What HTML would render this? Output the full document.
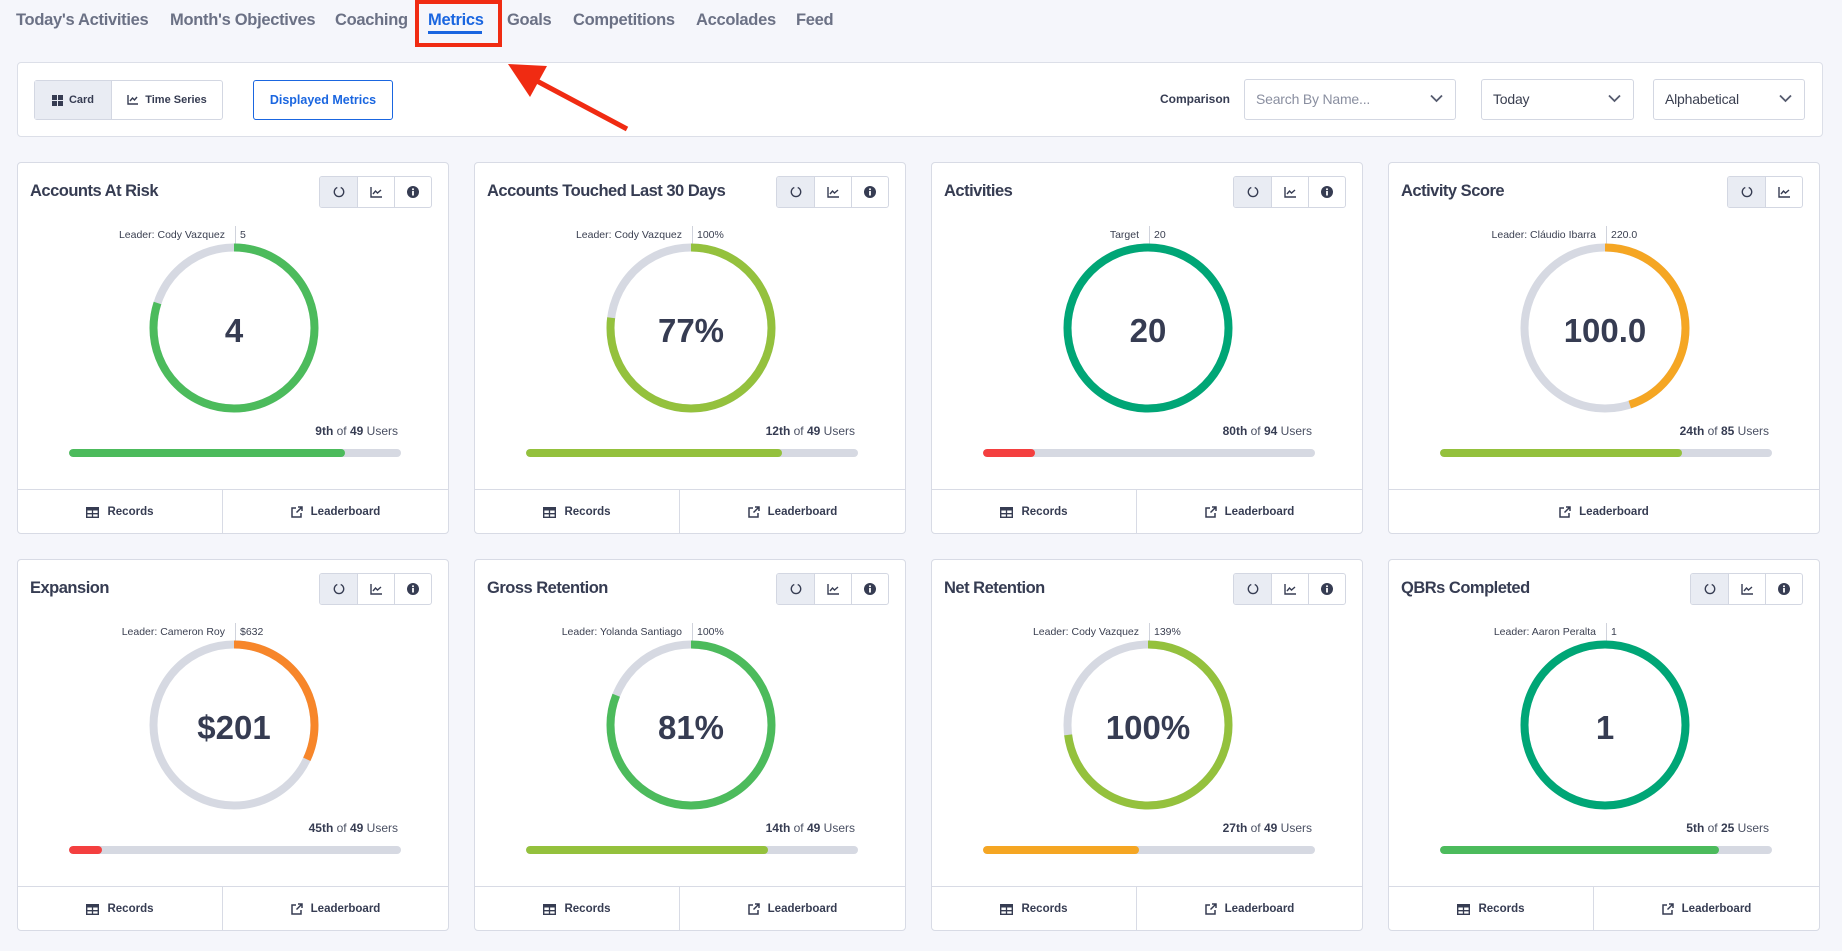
<!DOCTYPE html>
<html><head><meta charset="utf-8"><style>
*{box-sizing:border-box;margin:0;padding:0}
body{width:1842px;height:951px;background:#f5f6fb;font-family:"Liberation Sans",sans-serif;color:#363c52;position:relative;overflow:hidden}
.nav{position:absolute;top:11px;font-size:16.5px;font-weight:bold;color:#6b7185;letter-spacing:-0.3px}
.abs{position:absolute}
.panel{position:absolute;left:17px;top:62px;width:1806px;height:75px;background:#fff;border:1px solid #dcdfe8;border-radius:4px}
.btn{position:absolute;border:1px solid #d3d7e2;background:#fff;border-radius:3px;font-size:11px;font-weight:bold;display:flex;align-items:center;justify-content:center}
.sel{position:absolute;top:79px;height:41px;border:1px solid #d3d7e2;border-radius:3px;background:#fff;font-size:14px;color:#3a3f50;padding-left:11px;line-height:39px;letter-spacing:-0.2px}
.sel svg{position:absolute;right:12px;top:14px}
.card{position:absolute;width:432px;height:372px;background:#fff;border:1px solid #d8dbe5;border-radius:4px}
.title{position:absolute;left:12px;top:19px;font-size:16.5px;font-weight:bold;color:#363c52;letter-spacing:-0.5px}
.grp{position:absolute;top:13px;right:16px;height:32px;border:1px solid #d3d7e2;border-radius:3px;display:flex;overflow:hidden}
.grp div{width:37px;height:30px;display:flex;align-items:center;justify-content:center;border-left:1px solid #d3d7e2}
.grp div:first-child{border-left:none;background:#e9ecf3}
.lead{position:absolute;top:63px;left:0;width:432px;height:18px;font-size:10.5px;color:#3a3f50}
.lead .l{position:absolute;right:225px;top:3px;white-space:nowrap}
.lead .r{position:absolute;left:222px;top:3px;white-space:nowrap}
.lead .d{position:absolute;left:217px;top:0;width:1px;height:22px;background:#d0d3dc}
.ring{position:absolute;left:131px;top:80px}
.num{position:absolute;left:0;width:432px;top:149px;text-align:center;font-size:33px;font-weight:bold;color:#363c52}
.rank{position:absolute;right:50px;top:261px;font-size:12px;color:#4a5063}
.rank b{color:#363c52}
.track{position:absolute;left:51px;top:286px;width:332px;height:8px;border-radius:4px;background:#d6d9e2;overflow:hidden}
.track i{display:block;height:8px;border-radius:4px}
.foot{position:absolute;left:0;top:326px;width:430px;height:45px;border-top:1px solid #d8dbe5;display:flex;font-size:11.5px;font-weight:bold;color:#363c52}
.foot div{display:flex;align-items:center;justify-content:center;gap:8px}
.foot .a{width:205px;border-right:1px solid #d8dbe5}
.foot .b{flex:1}
</style></head><body>
<div class="nav" style="left:16px">Today's Activities</div>
<div class="nav" style="left:170px">Month's Objectives</div>
<div class="nav" style="left:335px">Coaching</div>
<div class="nav" style="left:428px;color:#1a66e0">Metrics</div>
<div class="abs" style="left:428px;top:31px;width:54px;height:3px;background:#1a66e0"></div>
<div class="abs" style="left:415px;top:0;width:87px;height:47px;border:4px solid #f02b12"></div>
<div class="nav" style="left:507px">Goals</div>
<div class="nav" style="left:573px">Competitions</div>
<div class="nav" style="left:696px">Accolades</div>
<div class="nav" style="left:796px">Feed</div>

<div class="panel"></div>
<div class="btn" style="left:34px;top:80px;width:189px;height:40px;justify-content:flex-start;padding:0">
 <div style="width:77px;height:38px;background:#e9ecf3;border-right:1px solid #d3d7e2;display:flex;align-items:center;justify-content:center;gap:6px"><svg width="11" height="11" viewBox="0 0 11 11" fill="#363c52"><rect x="0" y="0" width="5" height="5"/><rect x="6" y="0" width="5" height="5"/><rect x="0" y="6" width="5" height="5"/><rect x="6" y="6" width="5" height="5"/></svg>Card</div>
 <div style="flex:1;display:flex;align-items:center;justify-content:center;gap:7px"><svg width="11" height="10" viewBox="0 0 11 10" fill="none" stroke="#363c52" stroke-width="1.4"><path d="M1 0v9h10M3 6l2.5-3 2 2L10 2"/></svg>Time Series</div>
</div>
<div class="btn" style="left:253px;top:80px;width:140px;height:40px;border-color:#1a66e0;color:#1a66e0;font-size:12.5px">Displayed Metrics</div>
<div class="abs" style="left:1160px;top:92px;font-size:12px;font-weight:bold">Comparison</div>
<div class="sel" style="left:1244px;width:212px;color:#8a8fa0">Search By Name...<svg width="13" height="9" viewBox="0 0 13 9"><path d="M1 1.5l5.5 5.5L12 1.5" fill="none" stroke="#555b6e" stroke-width="1.8"/></svg></div>
<div class="sel" style="left:1481px;width:153px">Today<svg width="13" height="9" viewBox="0 0 13 9"><path d="M1 1.5l5.5 5.5L12 1.5" fill="none" stroke="#555b6e" stroke-width="1.8"/></svg></div>
<div class="sel" style="left:1653px;width:152px">Alphabetical<svg width="13" height="9" viewBox="0 0 13 9"><path d="M1 1.5l5.5 5.5L12 1.5" fill="none" stroke="#555b6e" stroke-width="1.8"/></svg></div>

<svg class="abs" style="left:0;top:0" width="700" height="160"><line x1="627" y1="129" x2="535" y2="80" stroke="#f02b12" stroke-width="5"/><polygon points="508,64 547,66 530,97" fill="#f02b12"/></svg>

<div id="cards"></div>
<script>
var C={g:'#4cbb5c',y:'#94c13d',t:'#00a676',a:'#f5a623',o:'#f7862a',r:'#f43f3f'};
var data=[
['Accounts At Risk','Leader: Cody Vazquez','5','4',.80,'g','9th','49',.83,'g',3,2],
['Accounts Touched Last 30 Days','Leader: Cody Vazquez','100%','77%',.77,'y','12th','49',.77,'y',3,2],
['Activities','Target','20','20',1,'t','80th','94',.156,'r',3,2],
['Activity Score','Leader: Cláudio Ibarra','220.0','100.0',.45,'a','24th','85',.73,'y',2,1],
['Expansion','Leader: Cameron Roy','$632','$201',.32,'o','45th','49',.10,'r',3,2],
['Gross Retention','Leader: Yolanda Santiago','100%','81%',.81,'g','14th','49',.73,'y',3,2],
['Net Retention','Leader: Cody Vazquez','139%','100%',.73,'y','27th','49',.47,'a',3,2],
['QBRs Completed','Leader: Aaron Peralta','1','1',1,'t','5th','25',.84,'g',3,2]];
var xs=[17,474,931,1388],ys=[162,559],h='';
var ic1='<svg width="12" height="12" viewBox="0 0 12 12"><path d="M4.3 1.5A4.7 4.7 0 1 0 7.7 1.5" fill="none" stroke="#363c52" stroke-width="1.4"/></svg>';
var ic2='<svg width="12" height="11" viewBox="0 0 12 11" fill="none" stroke="#363c52" stroke-width="1.4"><path d="M1 0v10h11M3 7l2.5-3 2 2L11 3"/></svg>';
var ic3='<svg width="12" height="12" viewBox="0 0 12 12"><circle cx="6" cy="6" r="6" fill="#363c52"/><rect x="5.1" y="5" width="1.8" height="4.5" fill="#fff"/><circle cx="6" cy="3.2" r="1" fill="#fff"/></svg>';
var rec='<svg width="13" height="11" viewBox="0 0 13 11"><rect x="0.7" y="0.7" width="11.6" height="9.6" fill="none" stroke="#363c52" stroke-width="1.4"/><rect x="0" y="0" width="13" height="3.5" fill="#363c52"/><path d="M6.5 3v7M1 6.7h11" stroke="#363c52" stroke-width="1.3"/></svg>';
var lb='<svg width="12" height="12" viewBox="0 0 12 12" fill="none" stroke="#363c52" stroke-width="1.5"><path d="M5 2H1v9h9V7M7 1h4v4M11 1L5.5 6.5"/></svg>';
var circ=2*Math.PI*80.5;
data.forEach(function(d,i){
 var x=xs[i%4],y=ys[Math.floor(i/4)];
 h+='<div class="card" style="left:'+x+'px;top:'+y+'px">';
 h+='<div class="title">'+d[0]+'</div>';
 h+='<div class="grp"><div>'+ic1+'</div><div>'+ic2+'</div>'+(d[10]==3?'<div>'+ic3+'</div>':'')+'</div>';
 h+='<div class="lead"><span class="l">'+d[1]+'</span><span class="d"></span><span class="r">'+d[2]+'</span></div>';
 var f=d[4]*circ;
 h+='<svg class="ring" width="170" height="170" viewBox="0 0 170 170"><circle cx="85" cy="85" r="80.5" fill="none" stroke="#d6d9e2" stroke-width="8"/><circle cx="85" cy="85" r="80.5" fill="none" stroke="'+C[d[5]]+'" stroke-width="8" stroke-dasharray="'+f+' '+(circ+10)+'" transform="rotate(-90 85 85)"/></svg>';
 h+='<div class="num">'+d[3]+'</div>';
 h+='<div class="rank"><b>'+d[6]+'</b> of <b>'+d[7]+'</b> Users</div>';
 h+='<div class="track"><i style="width:'+(d[8]*100)+'%;background:'+C[d[9]]+'"></i></div>';
 if(d[11]==2) h+='<div class="foot"><div class="a">'+rec+'Records</div><div class="b">'+lb+'Leaderboard</div></div>';
 else h+='<div class="foot"><div class="b">'+lb+'Leaderboard</div></div>';
 h+='</div>';
});
document.getElementById('cards').innerHTML=h;
</script>
</body></html>
